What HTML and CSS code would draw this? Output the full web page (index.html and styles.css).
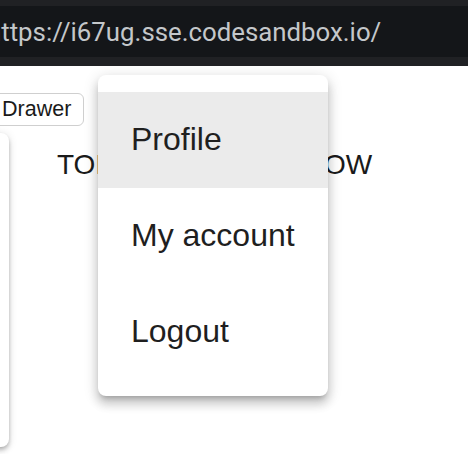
FILE: index.html
```html
<!DOCTYPE html>
<html>
<head>
<meta charset="utf-8">
<link rel="stylesheet" href="styles.css">
</head>
<body>
<div class="chrome">
  <div class="urlbar"><span class="url">https://i67ug.sse.codesandbox.io/</span></div>
</div>
<main class="page">
  <button class="drawer-btn">Drawer</button>
  <div class="content">
    <aside class="drawer"></aside>
    <p class="headline">TOP OF THE WINDOW</p>
  </div>
  <ul class="menu">
    <li class="item selected">Profile</li>
    <li class="item">My account</li>
    <li class="item">Logout</li>
  </ul>
</main>
</body>
</html>
```
FILE: styles.css
```css
html, body {
  margin: 0;
  padding: 0;
  background: #fff;
  width: 468px;
  height: 454px;
  overflow: hidden;
}
body {
  font-family: "Liberation Sans", Arial, sans-serif;
}
.chrome {
  background: #202124;
  padding: 6px 0 9px;
}
.urlbar {
  background: #141619;
  height: 51px;
  display: flex;
  align-items: center;
  overflow: hidden;
}
.url {
  font-family: Roboto, sans-serif;
  font-size: 25.8px;
  color: #c4c7ca;
  margin-left: -13px;
  white-space: nowrap;
}
.page {
  position: relative;
  height: 361px;
  padding-top: 27px;
  overflow: hidden;
}
.drawer-btn {
  display: block;
  margin: 0 0 0 -10px;
  width: 94px;
  height: 33px;
  padding: 0 0 0 11px;
  text-align: left;
  font-family: "Liberation Sans", Arial, sans-serif;
  font-size: 21.5px;
  color: #1a1a1a;
  background: #fff;
  border: 1px solid #cfcfcf;
  border-radius: 6px;
}
.content {
  display: flex;
  align-items: flex-start;
  margin-top: 7px;
}
.drawer {
  flex: none;
  width: 20px;
  height: 314px;
  margin-left: -11px;
  background: #fff;
  border-radius: 0 8px 8px 0;
  box-shadow: 0 2px 4px -1px rgba(0,0,0,0.2), 0 4px 5px 0 rgba(0,0,0,0.14), 0 1px 10px 0 rgba(0,0,0,0.12);
}
.headline {
  margin: 16px 0 0 48px;
  font-size: 28px;
  color: #1a1a1a;
  word-spacing: 6px;
  white-space: nowrap;
}
.menu {
  position: absolute;
  left: 98px;
  top: 9px;
  width: 230px;
  margin: 0;
  padding: 17px 0 16px;
  list-style: none;
  background: #fff;
  border-radius: 8px;
  box-shadow: 0 5px 5px -3px rgba(0,0,0,0.2), 0 8px 10px 1px rgba(0,0,0,0.14), 0 3px 14px 2px rgba(0,0,0,0.12);
}
.item {
  height: 94px;
  padding-bottom: 2px;
  display: flex;
  align-items: center;
  padding-left: 33px;
  font-size: 32px;
  color: #1f1f1f;
}
.item.selected {
  background: #ebebeb;
}
```
